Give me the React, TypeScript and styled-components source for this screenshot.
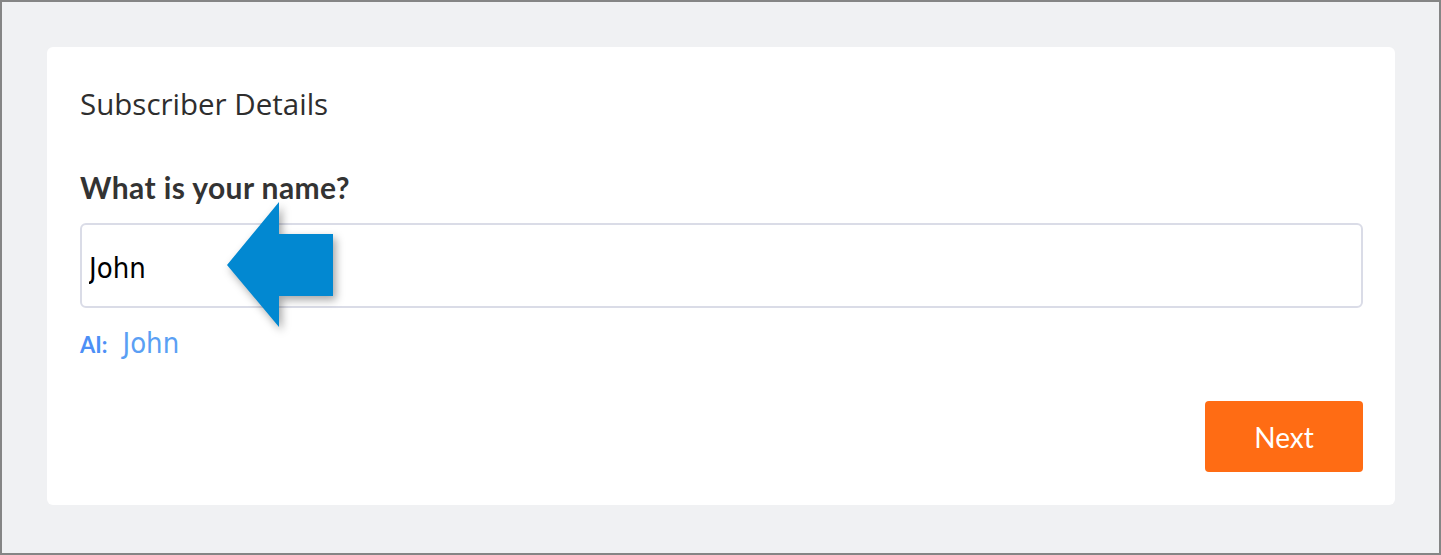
import React from "react";
import styled, { createGlobalStyle } from "styled-components";

const GlobalStyle = createGlobalStyle`
    html, body {
        margin: 0;
        padding: 0;
        background: #f0f1f3;
    }
    * {
        box-sizing: border-box;
    }
`;

const Frame = styled.div`
    width: 1441px;
    height: 555px;
    border: 2px solid #858585;
    background: #f0f1f3;
    padding: 45px 44px 48px 45px;
`;

const Card = styled.div`
    height: 458px;
    background: #fff;
    border-radius: 6px;
    padding: 37px 32px 0 33px;
    display: flex;
    flex-direction: column;
`;

const Title = styled.h2`
    margin: 0;
    font-family: "Open Sans", "Noto Sans", sans-serif;
    font-weight: 400;
    font-size: 29.5px;
    line-height: 40px;
    color: #2e2e2e;
`;

const Field = styled.div`
    position: relative;
    margin-top: 47px;
`;

const Label = styled.label`
    display: block;
    font-family: Lato, "Open Sans", sans-serif;
    font-weight: 700;
    font-size: 30px;
    letter-spacing: 0.4px;
    line-height: 32px;
    color: #333;
`;

const TextInput = styled.input`
    display: block;
    width: 100%;
    height: 85px;
    margin-top: 20px;
    padding: 4px 7px 0;
    border: 2px solid #dadce7;
    border-radius: 6px;
    background: #fff;
    font-family: "Liberation Sans Narrow", "DejaVu Sans Condensed", "Liberation Sans", sans-serif;
    font-size: 29px;
    color: #000;
    outline: none;
`;

const Arrow = styled.svg`
    position: absolute;
    left: 147px;
    top: 31px;
    overflow: visible;
    filter: drop-shadow(3px 4px 4px rgba(0, 0, 0, 0.35));
`;

const Suggestion = styled.div`
    display: flex;
    align-items: baseline;
    gap: 15px;
    margin-top: 17px;
    height: 36px;
    line-height: 36px;
`;

const SuggestionTag = styled.span`
    font-family: Lato, sans-serif;
    font-weight: 700;
    font-size: 22px;
    color: #4d8ff6;
`;

const SuggestionValue = styled.span`
    font-family: "Liberation Sans Narrow", "DejaVu Sans Condensed", "Liberation Sans", sans-serif;
    font-size: 29px;
    color: #5a9ff4;
`;

const Actions = styled.div`
    display: flex;
    justify-content: flex-end;
    margin-top: 40px;
`;

const NextButton = styled.button`
    width: 158px;
    height: 71px;
    border: none;
    border-radius: 4px;
    background: #ff6c14;
    color: #fff;
    font-family: Lato, sans-serif;
    font-size: 28px;
    font-weight: 400;
    cursor: pointer;
`;

const App = () => {
    return <>
        <GlobalStyle />
        <Frame>
            <Card>
                <Title>Subscriber Details</Title>
                <Field>
                    <Label htmlFor="name">What is your name?</Label>
                    <TextInput id="name" defaultValue="John" />
                    <Arrow width="107" height="125" viewBox="0 0 107 125">
                        <polygon points="0,63 52,0 52,32 106,32 106,94 52,94 52,125" fill="#0288d1" />
                    </Arrow>
                </Field>
                <Suggestion>
                    <SuggestionTag>AI:</SuggestionTag>
                    <SuggestionValue>John</SuggestionValue>
                </Suggestion>
                <Actions>
                    <NextButton>Next</NextButton>
                </Actions>
            </Card>
        </Frame>
    </>
}

export default App;
